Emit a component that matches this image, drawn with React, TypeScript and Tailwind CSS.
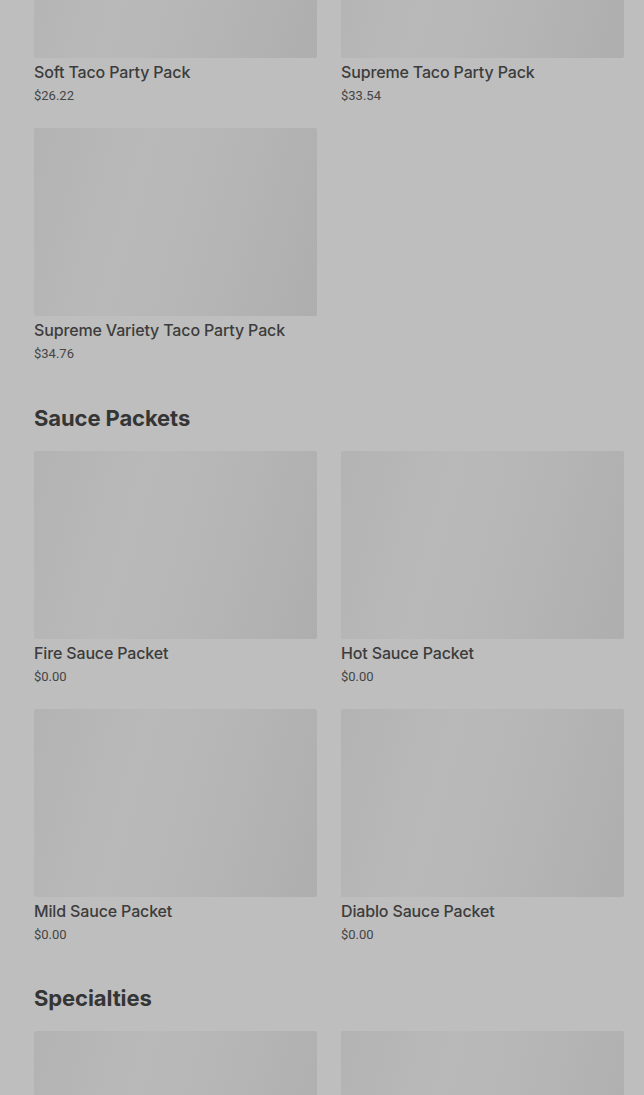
import React from "react";

type Item = { name: string; price: string };

const sections: { title?: string; items: Item[]; imagesOnly?: boolean }[] = [
  {
    items: [
      { name: "Soft Taco Party Pack", price: "$26.22" },
      { name: "Supreme Taco Party Pack", price: "$33.54" },
      { name: "Supreme Variety Taco Party Pack", price: "$34.76" },
    ],
  },
  {
    title: "Sauce Packets",
    items: [
      { name: "Fire Sauce Packet", price: "$0.00" },
      { name: "Hot Sauce Packet", price: "$0.00" },
      { name: "Mild Sauce Packet", price: "$0.00" },
      { name: "Diablo Sauce Packet", price: "$0.00" },
    ],
  },
  {
    title: "Specialties",
    imagesOnly: true,
    items: [
      { name: "", price: "" },
      { name: "", price: "" },
    ],
  },
];

function Card({ item, imageOnly }: { item: Item; imageOnly?: boolean }) {
  return (
    <div className="flex flex-col">
      <div className="h-[188px] rounded-[2px] bg-[linear-gradient(105deg,#b3b3b3_0%,#b9b9b9_35%,#b6b6b6_60%,#aeaeae_100%)]" />
      {!imageOnly && (
        <>
          <div className="mt-[2px] text-[16px] leading-[24px] font-medium text-[#3c3c3c] font-['Inter',sans-serif] tracking-[-0.15px]">
            {item.name}
          </div>
          <div className="mt-[2px] text-[13px] leading-[20px] text-[#454545] font-['Roboto',sans-serif]">
            {item.price}
          </div>
        </>
      )}
    </div>
  );
}

export default function App() {
  return (
    <div className="h-screen bg-[#bebebe] pl-[34px] pr-[20px] overflow-hidden">
      <div className="-mt-[130px]">
        {sections.map((s, i) => (
          <div key={i}>
            {s.title && (
              <h2 className="mt-[39.5px] mb-[19px] text-[22px] leading-[28px] font-bold text-[#353535] font-['Inter',sans-serif] tracking-[-0.1px]">
                {s.title}
              </h2>
            )}
            <div className="grid grid-cols-2 gap-x-[24px] gap-y-[22px]">
              {s.items.map((it, j) => (
                <Card key={j} item={it} imageOnly={s.imagesOnly} />
              ))}
            </div>
          </div>
        ))}
      </div>
    </div>
  );
}
